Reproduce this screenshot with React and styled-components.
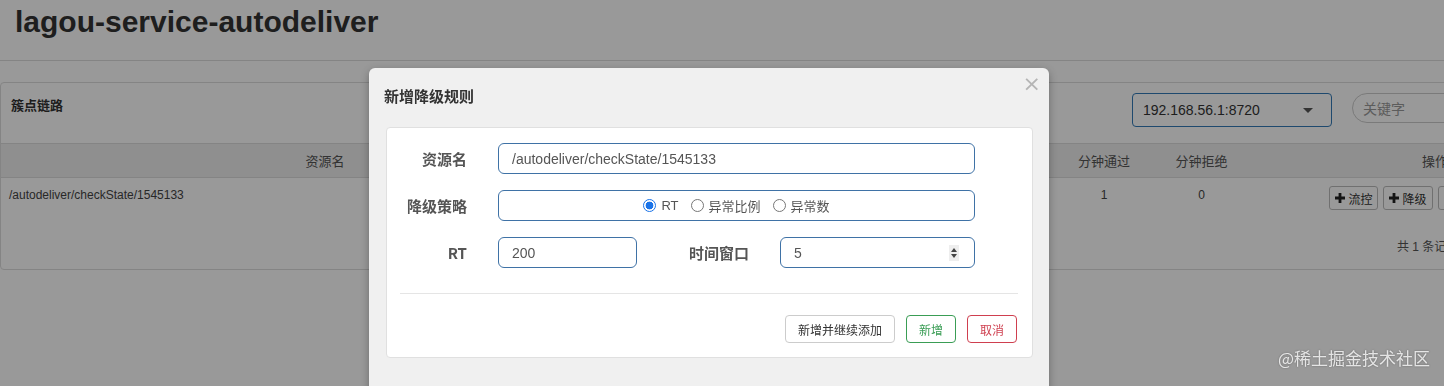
import React from 'react';
import styled, { createGlobalStyle } from 'styled-components';

const GlobalStyle = createGlobalStyle`
  html, body {
    margin: 0;
    padding: 0;
    overflow: hidden;
    background: #fff;
  }
  body {
    font-family: "Liberation Sans", Arial, "Noto Sans CJK SC", sans-serif;
    color: #333;
  }
  * {
    box-sizing: border-box;
  }
`;

const Page = styled.div`
  position: relative;
  width: 1444px;
  height: 386px;
  overflow: hidden;
`;

const TitleBar = styled.div`
  height: 61px;
  border-bottom: 1px solid #ddd;
  padding: 5px 0 0 15px;

  h1 {
    margin: 0;
    font-size: 30px;
    line-height: 34px;
    font-weight: bold;
    color: #333;
  }
`;

const Card = styled.div`
  margin-top: 21px;
  width: 1700px;
  border: 1px solid #ddd;
  border-radius: 4px;
`;

const CardHeader = styled.div`
  display: grid;
  grid-template-columns: 1101px 200px 200px;
  column-gap: 20px;
  height: 60px;
  padding-left: 10px;

  .name {
    padding-top: 12px;
    font-size: 13px;
    font-weight: bold;
    font-family: "Noto Sans CJK SC", sans-serif;
    color: #333;
  }
`;

const Select = styled.div`
  margin-top: 10px;
  height: 34px;
  border: 1px solid #337ab7;
  border-radius: 4px;
  padding: 0 10px;
  display: flex;
  align-items: center;
  justify-content: space-between;
  font-size: 14px;
  color: #333;

  .caret {
    width: 0;
    height: 0;
    margin-right: 8px;
    border-left: 5px solid transparent;
    border-right: 5px solid transparent;
    border-top: 5px solid #555;
  }
`;

const Search = styled.div`
  margin-top: 10px;
  height: 30px;
  border: 1px solid #ccc;
  border-radius: 15px;
  padding: 0 10px;
  display: flex;
  align-items: center;
  font-size: 14px;
  font-family: "Noto Sans CJK SC", sans-serif;
  color: #999;
`;

const Cols = styled.div`
  display: grid;
  grid-template-columns: 648px 406px 98px 97px 370px;
`;

const HeadRow = styled(Cols)`
  height: 35px;
  background: #eee;
  border-top: 1px solid #ddd;
  border-bottom: 1px solid #ddd;
  align-items: center;
  font-size: 13px;
  font-family: "Noto Sans CJK SC", sans-serif;
  color: #555;

  span {
    text-align: center;
  }
`;

const BodyRow = styled(Cols)`
  height: 48px;
  font-size: 12px;
  color: #444;

  span {
    text-align: center;
    padding-top: 10px;
  }
  span.res {
    text-align: left;
    padding-left: 8px;
  }
`;

const Ops = styled.div`
  display: flex;
  justify-content: center;
  gap: 5px;
  padding-top: 8px;
`;

const OpButton = styled.button`
  height: 24px;
  padding: 0 5px;
  display: flex;
  align-items: center;
  gap: 3px;
  border: 1px solid #bbb;
  border-radius: 3px;
  background: #fff;
  font-size: 12px;
  font-family: "Noto Sans CJK SC", sans-serif;
  color: #333;
`;

const Footer = styled(Cols)`
  height: 43px;
  font-size: 12px;
  font-family: "Liberation Sans", "Noto Sans CJK SC", sans-serif;
  color: #555;

  .total {
    grid-column: 5;
    padding: 11px 0 0 147px;
  }
`;

const Backdrop = styled.div`
  position: fixed;
  inset: 0;
  background: rgba(0, 0, 0, 0.4);
`;

const Modal = styled.div`
  position: absolute;
  left: 369px;
  top: 68px;
  width: 680px;
  height: 340px;
  padding: 0 16px 0 17px;
  background: #f0f0f0;
  border-radius: 6px;
  box-shadow: 0 3px 9px rgba(0, 0, 0, 0.3);
`;

const ModalHeader = styled.div`
  display: flex;
  justify-content: space-between;
  align-items: flex-start;
  height: 59px;

  h4 {
    margin: 19px 0 0 -2px;
    font-size: 15px;
    line-height: 17px;
    font-weight: bold;
    font-family: "Noto Sans CJK SC", sans-serif;
    color: #333;
  }
`;

const Close = styled.span`
  margin: 3px -8px 0 0;
  font-size: 22px;
  line-height: 26px;
  color: #b5b5b5;
  font-family: "DejaVu Sans", sans-serif;
`;

const Panel = styled.div`
  background: #fff;
  border: 1px solid #e0e0e0;
  border-radius: 4px;
  padding: 15px 0 14px 0;
`;

const FormRow = styled.div`
  display: flex;
  align-items: center;
  height: 31px;
  margin-bottom: 16px;

  &:last-of-type {
    margin-bottom: 0;
  }
`;

const Label = styled.label`
  width: ${(p) => p.$w || 96}px;
  padding-right: 16px;
  margin-right: 15px;
  text-align: right;
  font-size: 15px;
  font-weight: bold;
  font-family: "Noto Sans CJK SC", sans-serif;
  color: #555;
`;

const Field = styled.div`
  width: ${(p) => p.$w}px;
  height: 31px;
  border: 1px solid #3f72a6;
  border-radius: 6px;
  padding: 0 ${(p) => (p.$spin ? 15 : 13)}px 0 13px;
  display: flex;
  align-items: center;
  justify-content: ${(p) => (p.$center ? 'center' : 'space-between')};
  font-size: 14px;
  color: #555;

  input {
    border: none;
    outline: none;
    padding: 0;
    flex: 1;
    min-width: 0;
    width: 100%;
    font: inherit;
    color: inherit;
    background: transparent;
  }
`;

const Spinner = styled.span`
  flex: none;
  width: 10px;
  height: 16px;
  background: #eee;
  display: flex;
  flex-direction: column;
  align-items: center;
  justify-content: center;
  gap: 2px;

  i {
    width: 0;
    height: 0;
    border-left: 3.5px solid transparent;
    border-right: 3.5px solid transparent;
  }
  i.up {
    border-bottom: 4px solid #444;
  }
  i.down {
    border-top: 4px solid #444;
  }
`;

const RadioOption = styled.label`
  display: flex;
  align-items: center;
  gap: 5px;
  margin-right: 12px;
  font-size: 13px;
  font-family: "Liberation Sans", "Noto Sans CJK SC", sans-serif;
  color: #555;

  &:last-child {
    margin-right: 0;
  }

  input {
    appearance: none;
    margin: 0;
    width: 13px;
    height: 13px;
    border: 1px solid #777;
    border-radius: 50%;
    background: #fff;
  }
  input:checked {
    border-color: #1a73e8;
    background: radial-gradient(circle, #1a73e8 0 3.6px, #fff 4.2px);
  }
`;

const Divider = styled.div`
  height: 1px;
  margin: 25px 14px 0 13px;
  background: #e5e5e5;
`;

const Actions = styled.div`
  display: flex;
  justify-content: flex-end;
  gap: 11px;
  margin-top: 21px;
  padding-right: 15px;
`;

const tones = {
  plain: '#ccc',
  green: '#3a9d55',
  red: '#cf3f4f',
};

const ActionButton = styled.button`
  height: 28px;
  padding: 0 12px;
  border: 1px solid ${(p) => tones[p.$tone]};
  border-radius: 4px;
  background: #fff;
  font-size: 12px;
  font-family: "Noto Sans CJK SC", sans-serif;
  color: ${(p) => (p.$tone === 'plain' ? '#333' : tones[p.$tone])};
`;

const Watermark = styled.div`
  position: absolute;
  right: 14px;
  bottom: 16px;
  font-size: 17px;
  font-family: "Noto Sans CJK SC", sans-serif;
  color: rgba(255, 255, 255, 0.8);
  text-shadow: 0 0 2px rgba(0, 0, 0, 0.35);
`;

function PlusIcon() {
  return (
    <svg width="10" height="10" viewBox="0 0 10 10">
      <path d="M3.6 0h2.8v3.6H10v2.8H6.4V10H3.6V6.4H0V3.6h3.6z" fill="#222" />
    </svg>
  );
}

export default function App() {
  return (
    <Page>
      <GlobalStyle />
      <TitleBar>
        <h1>lagou-service-autodeliver</h1>
      </TitleBar>
      <Card>
        <CardHeader>
          <span className="name">簇点链路</span>
          <Select>
            <span>192.168.56.1:8720</span>
            <span className="caret" />
          </Select>
          <Search>关键字</Search>
        </CardHeader>
        <HeadRow>
          <span>资源名</span>
          <span />
          <span>分钟通过</span>
          <span>分钟拒绝</span>
          <span>操作</span>
        </HeadRow>
        <BodyRow>
          <span className="res">/autodeliver/checkState/1545133</span>
          <span />
          <span>1</span>
          <span>0</span>
          <Ops>
            <OpButton><PlusIcon />流控</OpButton>
            <OpButton><PlusIcon />降级</OpButton>
            <OpButton><PlusIcon />热点</OpButton>
            <OpButton><PlusIcon />授权</OpButton>
          </Ops>
        </BodyRow>
        <Footer>
          <span className="total">共 1 条记录</span>
        </Footer>
      </Card>

      <Backdrop />

      <Modal>
        <ModalHeader>
          <h4>新增降级规则</h4>
          <Close>×</Close>
        </ModalHeader>
        <Panel>
          <FormRow>
            <Label>资源名</Label>
            <Field $w={477}>
              <input defaultValue="/autodeliver/checkState/1545133" />
            </Field>
          </FormRow>
          <FormRow>
            <Label>降级策略</Label>
            <Field $w={477} $center>
              <RadioOption>
                <input type="radio" name="grade" defaultChecked />RT
              </RadioOption>
              <RadioOption>
                <input type="radio" name="grade" />异常比例
              </RadioOption>
              <RadioOption>
                <input type="radio" name="grade" />异常数
              </RadioOption>
            </Field>
          </FormRow>
          <FormRow>
            <Label>RT</Label>
            <Field $w={139}>
              <input defaultValue="200" />
            </Field>
            <Label $w={128}>时间窗口</Label>
            <Field $w={195} $spin>
              <input defaultValue="5" />
              <Spinner>
                <i className="up" />
                <i className="down" />
              </Spinner>
            </Field>
          </FormRow>
          <Divider />
          <Actions>
            <ActionButton $tone="plain">新增并继续添加</ActionButton>
            <ActionButton $tone="green">新增</ActionButton>
            <ActionButton $tone="red">取消</ActionButton>
          </Actions>
        </Panel>
      </Modal>

      <Watermark>@稀土掘金技术社区</Watermark>
    </Page>
  );
}
